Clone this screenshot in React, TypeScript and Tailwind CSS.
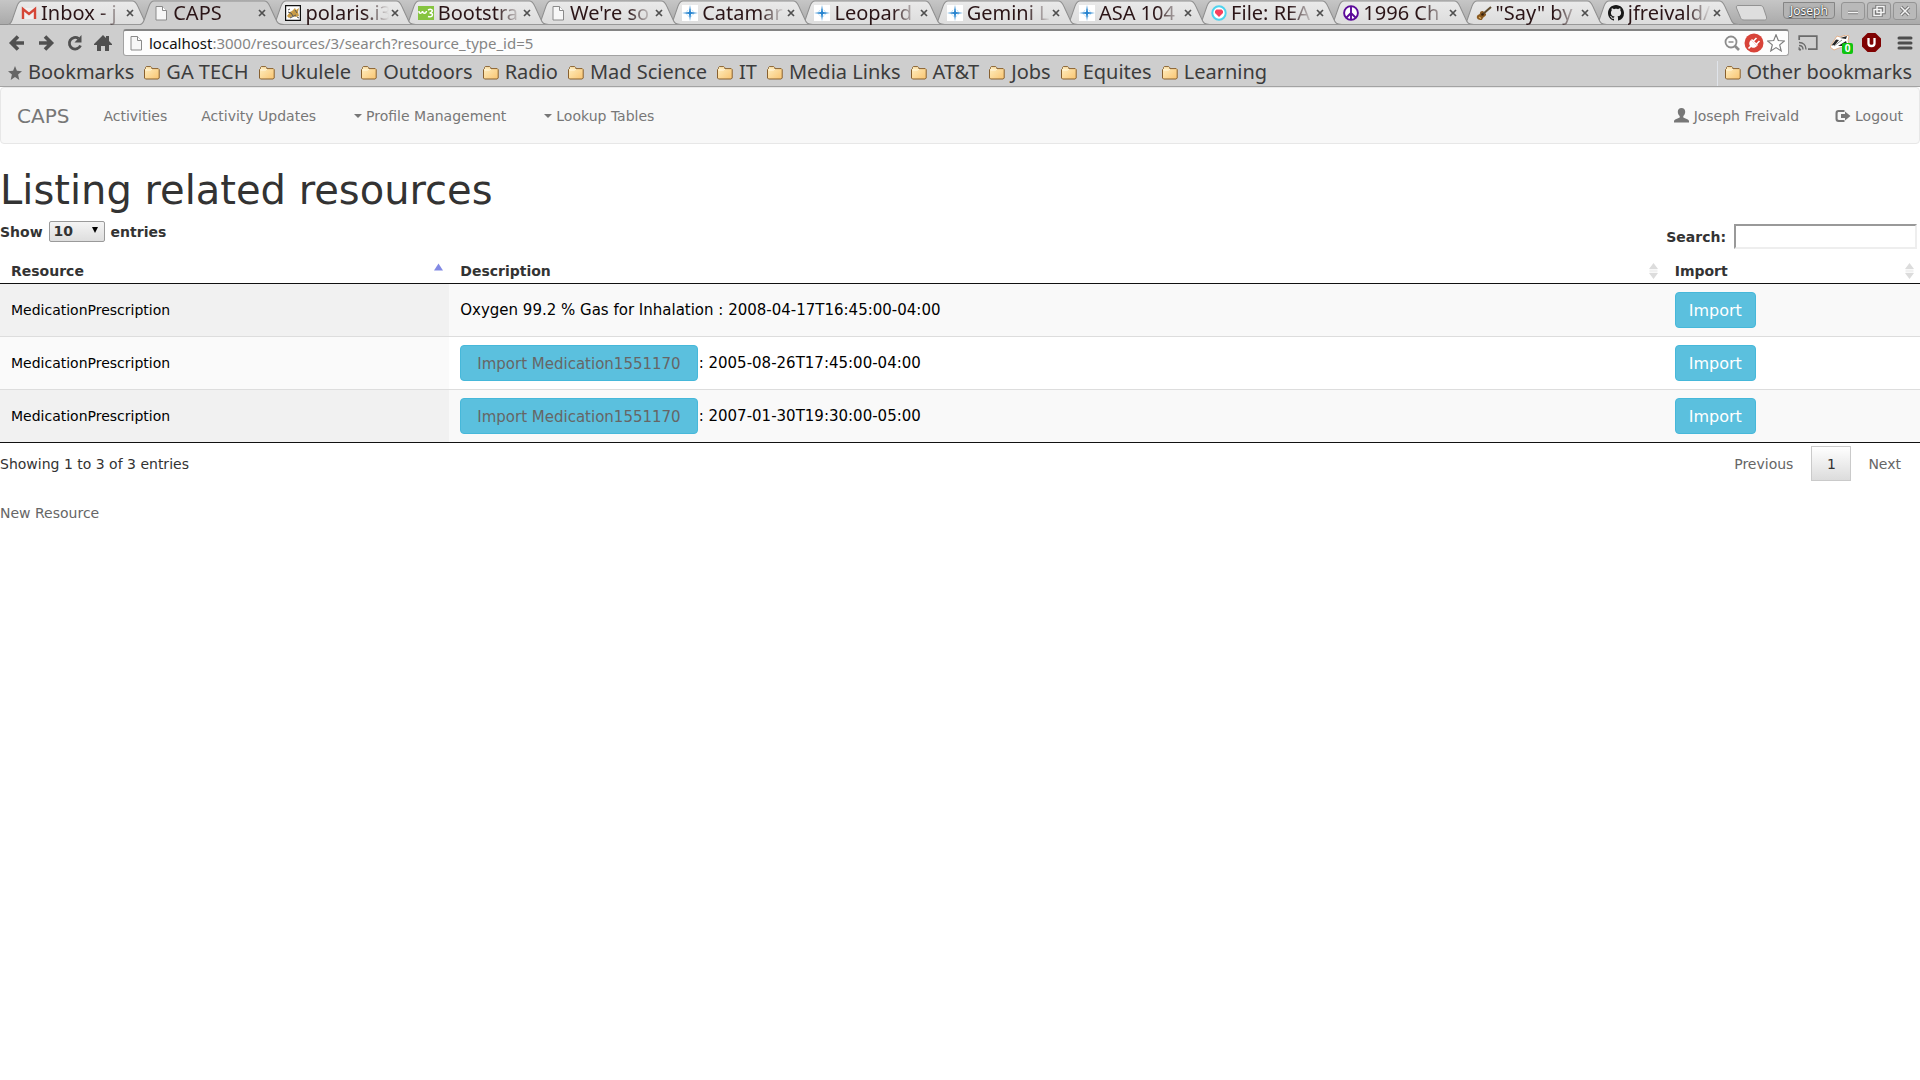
import React from "react";

type IconKind =
  | "gmail"
  | "doc"
  | "polaris"
  | "w3"
  | "spark"
  | "heart"
  | "peace"
  | "guitar"
  | "github";

const tabs: { title: string; icon: IconKind; active?: boolean }[] = [
  { title: "Inbox - j", icon: "gmail" },
  { title: "CAPS", icon: "doc", active: true },
  { title: "polaris.i3", icon: "polaris" },
  { title: "Bootstra", icon: "w3" },
  { title: "We're so", icon: "doc" },
  { title: "Catamar", icon: "spark" },
  { title: "Leopard", icon: "spark" },
  { title: "Gemini L", icon: "spark" },
  { title: "ASA 104", icon: "spark" },
  { title: "File: REA", icon: "heart" },
  { title: "1996 Ch", icon: "peace" },
  { title: '"Say" by', icon: "guitar" },
  { title: "jfreivald/", icon: "github" },
];

const bookmarks = [
  "GA TECH",
  "Ukulele",
  "Outdoors",
  "Radio",
  "Mad Science",
  "IT",
  "Media Links",
  "AT&T",
  "Jobs",
  "Equites",
  "Learning",
];

const rows = [
  { resource: "MedicationPrescription", medication: "", text: "Oxygen 99.2 % Gas for Inhalation : 2008-04-17T16:45:00-04:00" },
  { resource: "MedicationPrescription", medication: "Import Medication1551170", text: ": 2005-08-26T17:45:00-04:00" },
  { resource: "MedicationPrescription", medication: "Import Medication1551170", text: ": 2007-01-30T19:30:00-05:00" },
];

function DocIcon() {
  return (
    <svg viewBox="0 0 16 16" className="size-4 shrink-0">
      <path d="M3 1.5h6.5L13.5 5.5v9.5H3z" fill="#f7f7f7" stroke="#8a8a8a" />
      <path d="M9.5 1.5v4h4" fill="#fff" stroke="#8a8a8a" />
    </svg>
  );
}

function Favicon({ kind }: { kind: IconKind }) {
  switch (kind) {
    case "gmail":
      return (
        <svg viewBox="0 0 16 16" className="size-4 shrink-0">
          <path d="M1.5 3h13v11h-13z" fill="#f1efef" />
          <path d="M2 14V4l6 5 6-5v10" fill="none" stroke="#d54637" strokeWidth="2.4" />
        </svg>
      );
    case "doc":
      return <DocIcon />;
    case "polaris":
      return (
        <svg viewBox="0 0 16 16" className="size-4 shrink-0">
          <path d="M.6.6h14.8v14.8H.6z" fill="#fff" stroke="#111" strokeWidth="1.2" />
          <path d="M2 11l3-4 2-1 3-3 1 2 3-2-1 4 1 4-3 1-3-1-4 2z" fill="#c89b45" />
          <path d="M3 7l3 1 2 3M10 5l2 3M5 13l6-3M12 12l2 1M3 5l2-1" stroke="#555" fill="none" />
        </svg>
      );
    case "w3":
      return (
        <svg viewBox="0 0 16 16" className="size-4 shrink-0">
          <path d="M0 1h16v14H0z" fill="#86c440" />
          <path
            d="M1 6c0 3 3 3 3.500 0 .5 3 3.500 3 4 0M10 5c3-1.500 5 0 4 1.500-.5 1-1.500 1.500-2.500 1.500 3 0 3.500 1.500 2.500 3-1 1-2.500 1-4 .5"
            fill="none"
            stroke="#fff"
            strokeWidth="1.500"
          />
        </svg>
      );
    case "spark":
      return (
        <svg viewBox="0 0 16 16" className="size-4 shrink-0">
          <path d="M0 0h16v16H0z" fill="#fff" />
          <circle cx="8" cy="8" r="3.500" fill="none" stroke="#b5daf3" strokeDasharray="2 1" />
          <path d="M8 0l1 7 7 1-7 1-1 7-1-7-7-1 7-1z" fill="#2583cf" />
        </svg>
      );
    case "heart":
      return (
        <svg viewBox="0 0 16 16" className="size-4 shrink-0">
          <circle cx="8" cy="8" r="6.700" fill="#fff" stroke="#4fd3ee" strokeWidth="2" />
          <path d="M8 12L4 8V6l1.500-1.500h5L12 6v2z" fill="#f8405c" />
        </svg>
      );
    case "peace":
      return (
        <svg viewBox="0 0 16 16" className="size-4 shrink-0">
          <g fill="none" stroke="#5c0a9a" strokeWidth="1.900">
            <circle cx="8" cy="8" r="6.900" fill="#fff" />
            <path d="M8 1v14M8 8l-5 5M8 8l5 5" />
          </g>
        </svg>
      );
    case "guitar":
      return (
        <svg viewBox="0 0 16 16" className="size-4 shrink-0">
          <path d="M1 11c1-2 3-1 3-3s3-3 4-1l1 1c2 1 1 3-1 4s-1 3-3 3-5-1-4-4z" fill="#8a5a20" />
          <path d="M7 9l8-7" stroke="#5f4a2c" strokeWidth="2" />
          <circle cx="6.500" cy="9.500" r="1.300" fill="#3a220c" />
          <path d="M3 12l2 1.500" stroke="#e0b66a" strokeWidth="1.200" />
        </svg>
      );
    case "github":
      return (
        <svg viewBox="0 0 16 16" className="size-4 shrink-0">
          <path
            fill="#181818"
            d="M8 0C3.580 0 0 3.580 0 8c0 3.540 2.290 6.530 5.470 7.590.4.070.55-.17.55-.38 0-.19-.010-.82-.010-1.490-2.010.37-2.530-.49-2.690-.94-.09-.23-.48-.94-.82-1.130-.28-.15-.68-.52-.010-.53.63-.010 1.080.58 1.230.82.72 1.210 1.870.87 2.330.66.070-.52.28-.87.510-1.070-1.780-.2-3.640-.89-3.640-3.950 0-.87.310-1.590.82-2.150-.08-.2-.36-1.020.08-2.120 0 0 .67-.21 2.200.82.64-.18 1.320-.27 2-.27s1.360.09 2 .27c1.530-1.040 2.200-.82 2.200-.82.44 1.100.16 1.920.08 2.120.510.56.82 1.270.82 2.150 0 3.070-1.870 3.750-3.650 3.950.29.25.54.73.54 1.480 0 1.070-.010 1.930-.010 2.200 0 .21.15.46.55.38A8.010 8.010 0 0016 8c0-4.420-3.580-8-8-8z"
          />
        </svg>
      );
  }
}

function Tab({ tab, order }: { tab: (typeof tabs)[number]; order: number }) {
  return (
    <div className="relative h-[25px] min-w-0 flex-1" style={{ zIndex: order }}>
      <svg viewBox="0 0 144 25" preserveAspectRatio="none" className="absolute top-0 left-0 h-[25px] w-[calc(100%+12px)]">
        <defs>
          <linearGradient id="tabFill" x1="0" y1="0" x2="0" y2="1">
            <stop offset="0" stopColor="#eaeaea" />
            <stop offset="1" stopColor="#dcdcdc" />
          </linearGradient>
        </defs>
        <path
          d="M0 25C3 24 3.500 22 4.500 19L9 6c1.500-4 2.500-5 5-5h110c3 0 4 1.500 5.500 5l6 13c1.500 4 3 5.500 8 6z"
          fill={tab.active ? "#cecece" : "url(#tabFill)"}
        />
        <path
          d="M0 24.500C3 24 3.500 22 4.500 19L9 6c1.500-4 2.500-5 5-5h110c3 0 4 1.500 5.500 5l6 13c1.500 4 3 5.500 8 5.500"
          fill="none"
          stroke="#8f8f8f"
        />
        {!tab.active && <path d="M0 24.500h144" stroke="#989898" />}
      </svg>
      <div className="relative flex h-[25px] items-center pl-[13px]">
        <Favicon kind={tab.icon} />
        <span className="ml-1 min-w-0 flex-1 overflow-hidden mask-r-from-70% text-[20px] leading-[25px] whitespace-nowrap text-[#2b1517]">
          {tab.title}
        </span>
        <button type="button" aria-label={`Close ${tab.title}`} className="mr-1 size-3 shrink-0">
          <svg viewBox="0 0 12 12" className="size-3">
            <path d="M3 3l6 6M9 3l-6 6" stroke="#4f4f4f" strokeWidth="1.700" />
          </svg>
        </button>
      </div>
    </div>
  );
}

function WindowButton({ label, children }: { label: string; children: React.ReactNode }) {
  return (
    <button
      type="button"
      aria-label={label}
      className="flex h-[18px] w-6 items-center justify-center rounded-[3px] border border-[#949494] bg-[#b9b9b9]"
    >
      <svg viewBox="0 0 16 12" className="h-3 w-4" fill="none" stroke="#777" strokeWidth="3.400">
        {children}
        <g stroke="#f4f4f4" strokeWidth="1.500">{children}</g>
      </svg>
    </button>
  );
}

function Folder() {
  return (
    <svg viewBox="0 0 16 14" className="h-[14px] w-4">
      <defs>
        <linearGradient id="folderFill" x1="0" y1="0" x2="1" y2="1">
          <stop offset="0" stopColor="#fff0c4" />
          <stop offset="1" stopColor="#f9c470" />
        </linearGradient>
      </defs>
      <path
        d="M.5 12V3.500l1-1V1.500l.8-.9h4.400l1 1v1h6.500l1 1V12l-1 1H1.500z"
        fill="url(#folderFill)"
        stroke="#88602f"
      />
      <path d="M1.500 4h5l1.500-1" fill="none" stroke="#fff8e2" />
    </svg>
  );
}

function BrowserChrome() {
  return (
    <header className="font-['Noto_Sans',sans-serif]">
      <div className="flex h-[25px] bg-linear-to-b from-[#c6c6c6] to-[#a9a9a9] pl-2 shadow-[inset_0_-1px_0_#8f8f8f]">
        <div className="isolate flex min-w-0 flex-1">
          {tabs.map((tab, i) => (
            <Tab key={tab.title} tab={tab} order={tab.active ? 20 : tabs.length - i} />
          ))}
        </div>
        <button type="button" aria-label="New tab" className="ml-2 h-[25px] w-8">
          <svg viewBox="0 0 32 25" className="h-[25px] w-8">
            <path d="M3 5.500h22c2 0 3 1 3.500 2.500l3 9c.5 2-.5 3-2 3H9c-2 0-3-1-3.500-2.500l-4-9.500c-.5-1.500 0-2.500 1.500-2.500z" fill="#dedede" stroke="#929292" />
          </svg>
        </button>
        <div className="ml-4 flex items-start gap-[2px] pt-[2px] pr-[3px]">
          <button
            type="button"
            className="mr-1 h-[17px] w-[52px] rounded-b-[4px] border border-[#858585] bg-[#b4b4b4] text-[12px] leading-[15px] text-white [text-shadow:0_0_1px_#222,0_0_2px_#444,0_1px_1px_#444]"
          >
            Joseph
          </button>
          <WindowButton label="Minimize"><path d="M3 7.500h10" /></WindowButton>
          <WindowButton label="Restore"><path d="M6 1.500h7v6H6zM3 4.500h7v6H3z" /></WindowButton>
          <WindowButton label="Close window"><path d="M4 2l8 8M12 2l-8 8" /></WindowButton>
        </div>
      </div>

      <div className="flex h-[35px] items-center bg-[#cecece] pl-2">
        <div className="flex items-center gap-[10px] text-[#505050]">
          <button type="button" aria-label="Back">
            <svg viewBox="0 0 18 18" className="size-[18px]" fill="none" stroke="currentColor" strokeWidth="3.600">
              <path d="M16 9H4M10 2.500L3.500 9l6.500 6.500" />
            </svg>
          </button>
          <button type="button" aria-label="Forward" className="ml-[2px]">
            <svg viewBox="0 0 18 18" className="size-[18px]" fill="none" stroke="currentColor" strokeWidth="3.600">
              <path d="M1 9h12M7 2.500L13.500 9 7 15.500" />
            </svg>
          </button>
          <button type="button" aria-label="Reload">
            <svg viewBox="0 0 18 18" className="size-[18px]">
              <path d="M14.500 11.500A5.800 5.800 0 1112.500 4.500" fill="none" stroke="currentColor" strokeWidth="2.800" />
              <path d="M15.500 1v7.500H8.500z" fill="currentColor" />
            </svg>
          </button>
          <button type="button" aria-label="Home">
            <svg viewBox="0 0 18 18" className="size-[18px]" fill="currentColor">
              <path d="M9 1L0 10v1h3v6h4v-5h4v5h4v-6h3v-1l-3-3V2h-3v2z" />
            </svg>
          </button>
        </div>
        <div className="ml-[11px] flex h-[27px] flex-1 items-center rounded-[3px] border border-t-2 border-[#a2a2a2] border-t-[#858585] bg-[#fdfdfd] pr-[3px] pl-[4px]">
          <DocIcon />
          <div className="ml-[5px] flex-1 text-[15px] leading-[22px] whitespace-nowrap text-[#858585]">
            <span className="text-[#111]">localhost</span>:3000/resources/3/search?resource_type_id=5
          </div>
          <div className="flex items-center gap-[3px]">
            <button type="button" aria-label="Zoom">
              <svg viewBox="0 0 18 18" className="size-[18px]" fill="none" stroke="#8c8c8c">
                <circle cx="8" cy="8" r="5.500" strokeWidth="1.800" />
                <path d="M12 12l4 4" strokeWidth="2.600" />
                <path d="M5.500 8h5" strokeWidth="1.500" />
              </svg>
            </button>
            <button type="button" aria-label="Plugin">
              <svg viewBox="0 0 20 20" className="size-5">
                <circle cx="10" cy="10" r="9.500" fill="#d84339" />
                <path d="M7 7l6 6c-2 2.500-5 2-6.500.5S4.500 9 7 7z" fill="#fff" />
                <path d="M7.500 6.500l6 6M4.500 15.500l2.500-2.500M9.500 8l3-3M12.500 11l3-3" stroke="#fff" strokeWidth="1.600" />
              </svg>
            </button>
            <button type="button" aria-label="Bookmark this page">
              <svg viewBox="0 0 18 18" className="size-[18px]">
                <path d="M9 .8l2.300 5.700 6 .5-4.600 3.900 1.500 6L9 13.600l-5.200 3.300 1.500-6L.7 7l6-.5z" fill="#fff" stroke="#7e7e7e" strokeWidth="1.200" />
              </svg>
            </button>
          </div>
        </div>
        <div className="flex items-center gap-3 pr-[7px] pl-[9px]">
          <button type="button" aria-label="Cast">
            <svg viewBox="0 0 20 16" className="h-4 w-5" fill="none" stroke="#6b6b6b">
              <path d="M1.200 5V1.200h17.600v13H10" strokeWidth="1.700" />
              <path d="M1 7.500c4.500 0 7 3 7 7M1 10.500c2.500 0 4 1.500 4 4" strokeWidth="1.400" />
              <path d="M1 12.500l2 2.500H1z" fill="#6b6b6b" />
            </svg>
          </button>
          <button type="button" aria-label="Privacy Badger" className="relative">
            <svg viewBox="0 0 20 16" className="h-4 w-5">
              <path d="M0 12L5 4l2-3 3 1 6-2 3 1-1 5 1 3-5 3-5 1-5 2z" fill="#fff" stroke="#e2a477" strokeWidth=".8" />
              <path d="M1.500 10.500L6 4.500l3 .5-4 5zM10 3l7-2-1 3zM8 11l8-5 1 3-5 2z" fill="#262626" />
              <path d="M4 11l8-6" stroke="#8a8a8a" />
            </svg>
            <span className="absolute top-2 left-3 h-[11px] w-[11px] rounded-[2px] bg-[#10c410] text-center text-[10px] leading-[11px] font-bold text-white">0</span>
          </button>
          <button type="button" aria-label="uBlock">
            <svg viewBox="0 0 19 19" className="size-[19px]">
              <path d="M5.600 0h7.800L19 5.600v7.800L13.400 19H5.600L0 13.400V5.600z" fill="#7f0202" />
              <path d="M6.500 5v5.500c0 2 1 2.500 3 2.500s3-.5 3-2.500V5" fill="none" stroke="#fff" strokeWidth="2.300" />
            </svg>
          </button>
          <button type="button" aria-label="Menu" className="ml-1">
            <svg viewBox="0 0 16 16" className="size-4">
              <path d="M2 3h12M2 8h12M2 13h12" stroke="#4d4d4d" strokeWidth="3" strokeLinecap="round" />
            </svg>
          </button>
        </div>
      </div>

      <nav
        aria-label="Bookmarks"
        className="flex h-[27px] items-center border-b border-[#a3a3a3] bg-[#cecece] pr-2 pl-2 text-[20px] leading-[22px] whitespace-nowrap text-[#3c3c3c]"
      >
        <a href="#bookmarks" className="mr-[10px] flex items-center gap-[6px]">
          <svg viewBox="0 0 14 14" className="size-[14px]">
            <path d="M7 0l1.900 4.800 5.100.4-3.900 3.300L11.300 14 7 11l-4.300 3 1.200-5.500L0 5.200l5.100-.4z" fill="#666" />
          </svg>
          <span className="pb-[3px]">Bookmarks</span>
        </a>
        <div className="flex gap-[10px]">
          {bookmarks.map((name) => (
            <a key={name} href="#folder" className="flex items-center gap-[6px]">
              <Folder />
              <span className="pb-[3px]">{name}</span>
            </a>
          ))}
        </div>
        <a href="#other" className="ml-auto flex items-center gap-[5px] border-l border-[#e0e4ea] pl-[7px]">
          <Folder />
          <span className="pb-[3px]">Other bookmarks</span>
        </a>
      </nav>
    </header>
  );
}

function Caret() {
  return <span className="inline-block border-x-4 border-t-4 border-x-transparent border-t-[#777]" />;
}

function NavBar() {
  return (
    <nav className="flex h-[57px] items-center justify-between rounded-[4px] border border-[#e7e7e7] bg-[#f8f8f8] px-4 text-[#777]">
      <div className="flex items-center">
        <a href="#home" className="mr-[34px] text-[20px]">CAPS</a>
        <div className="flex items-center gap-[34px]">
          <a href="#activities">Activities</a>
          <a href="#updates">Activity Updates</a>
          <a href="#profile" className="flex items-center gap-1 pl-1"><Caret />Profile Management</a>
          <a href="#lookup" className="flex items-center gap-1 pl-1"><Caret />Lookup Tables</a>
        </div>
      </div>
      <div className="flex items-center gap-9">
        <a href="#user" className="flex items-center gap-[5px]">
          <svg viewBox="0 0 15 15" className="size-[15px]" fill="currentColor">
            <path d="M7.500 0C5.200 0 3.800 1.500 3.800 3.800c0 1.800.8 3.300 1.900 4.200v1.500L1.200 11.400C.4 11.800 0 12.400 0 13.300V14.500h15v-1.200c0-.9-.4-1.500-1.200-1.900L9.300 9.500V8c1.100-.9 1.900-2.400 1.900-4.200C11.200 1.500 9.800 0 7.500 0z" />
          </svg>
          Joseph Freivald
        </a>
        <a href="#logout" className="flex items-center gap-1">
          <svg viewBox="0 0 16 14" className="h-[14px] w-4" fill="currentColor">
            <path d="M9.500 1H3.500C1.500 1 .5 2 .5 4v6c0 2 1 3 3 3h6v-2H4c-1 0-1.400-.4-1.400-1.400V4.400C2.600 3.400 3 3 4 3h5.500zM10 2.500L15.500 7 10 11.500V9H6V5h4z" />
          </svg>
          Logout
        </a>
      </div>
    </nav>
  );
}

function SortBoth() {
  return (
    <svg viewBox="0 0 9 16" className="h-4 w-[9px] shrink-0" fill="#dcdcdc">
      <path d="M4.500 0L9 6H0zM0 10h9l-4.500 6z" />
      <path d="M.5 6.500h8v3h-8z" fill="#f1f1f1" />
    </svg>
  );
}

const infoButton = "h-9 rounded-[4px] border border-[#46b8da] bg-[#5bc0de] pt-px leading-6";

function ResourceTable() {
  return (
    <table className="w-full table-fixed border-separate border-spacing-0 border-b border-[#111] text-left">
      <colgroup>
        <col className="w-[23.4%]" />
        <col />
        <col className="w-[13.350%]" />
      </colgroup>
      <thead>
        <tr className="text-[#333]">
          <th scope="col" className="h-[27px] border-b border-[#111] pt-px pr-[6px] pl-[11px]">
            <div className="flex items-center justify-between">
              Resource
              <svg viewBox="0 0 9 16" className="h-4 w-[9px]" fill="#8289e4">
                <path d="M4.500 0.500L9 7.500H0z" />
              </svg>
            </div>
          </th>
          <th scope="col" className="border-b border-[#111] pt-px pr-[6px] pl-[11px]">
            <div className="flex items-center justify-between">Description<SortBoth /></div>
          </th>
          <th scope="col" className="border-b border-[#111] pt-px pr-[6px] pl-[11px]">
            <div className="flex items-center justify-between">Import<SortBoth /></div>
          </th>
        </tr>
      </thead>
      <tbody className="text-black">
        {rows.map((row, i) => {
          const rule = i > 0 ? "border-t border-[#ddd]" : "";
          const height = i > 0 ? "h-[53px]" : "h-[52px]";
          const odd = i % 2 === 0;
          return (
            <tr key={i} className={odd ? "bg-[#f9f9f9]" : "bg-white"}>
              <td className={`${height} ${rule} ${odd ? "bg-[#f1f1f1]" : "bg-[#fafafa]"} px-[11px]`}>{row.resource}</td>
              <td className={`${rule} px-[11px] text-[15px]`}>
                <div className="flex items-center gap-px">
                  {row.medication && (
                    <button type="button" className={`${infoButton} px-4 text-[#666]`}>{row.medication}</button>
                  )}
                  {row.text}
                </div>
              </td>
              <td className={`${rule} px-[11px]`}>
                <button type="button" className={`${infoButton} block px-[13px] text-[16px] text-white`}>Import</button>
              </td>
            </tr>
          );
        })}
      </tbody>
    </table>
  );
}

export default function App() {
  return (
    <div className="min-h-screen bg-white">
      <BrowserChrome />
      <div className="font-['DejaVu_Sans',Verdana,sans-serif] text-[14px] leading-5 text-[#333]">
        <NavBar />
        <main>
          <h1 className="mt-6 mb-[9px] text-[40px] leading-[44px]">Listing related resources</h1>
          <div className="flex items-start justify-between">
            <label className="flex items-center gap-[6px] font-bold">
              Show
              <span className="relative flex">
                <select
                  defaultValue="10"
                  className="h-[21px] w-14 appearance-none rounded-[2px] border border-[#9a9a9a] bg-linear-to-b from-[#f4f4f4] to-[#dedede] px-1 text-[14px] leading-[19px] font-bold"
                >
                  <option>10</option>
                  <option>25</option>
                </select>
                <svg viewBox="0 0 6 6" className="pointer-events-none absolute top-[6px] right-[7px] size-[6px]">
                  <path d="M0 0h6L3 6z" fill="#000" />
                </svg>
              </span>
              entries
            </label>
            <label className="flex items-center gap-2 pt-[3px] pr-[3px] font-bold">
              Search:
              <input type="search" className="h-[25px] w-[183px] border-2 border-t-[#999] border-r-[#eee] border-b-[#eee] border-l-[#999] bg-white" />
            </label>
          </div>
          <div className="pt-2">
            <ResourceTable />
          </div>
          <div className="flex items-center justify-between pt-[3px]">
            <p>Showing 1 to 3 of 3 entries</p>
            <div className="flex items-center pr-[2px] text-[#666]">
              <button type="button" className="h-[35px] border border-transparent px-[17px]">Previous</button>
              <button type="button" className="h-[35px] w-10 border border-[#cacaca] bg-linear-to-b from-white to-[#dcdcdc] text-[#333]">1</button>
              <button type="button" className="h-[35px] border border-transparent px-4">Next</button>
            </div>
          </div>
          <a href="#new" className="mt-[22px] inline-block text-[#666]">New Resource</a>
        </main>
      </div>
    </div>
  );
}
